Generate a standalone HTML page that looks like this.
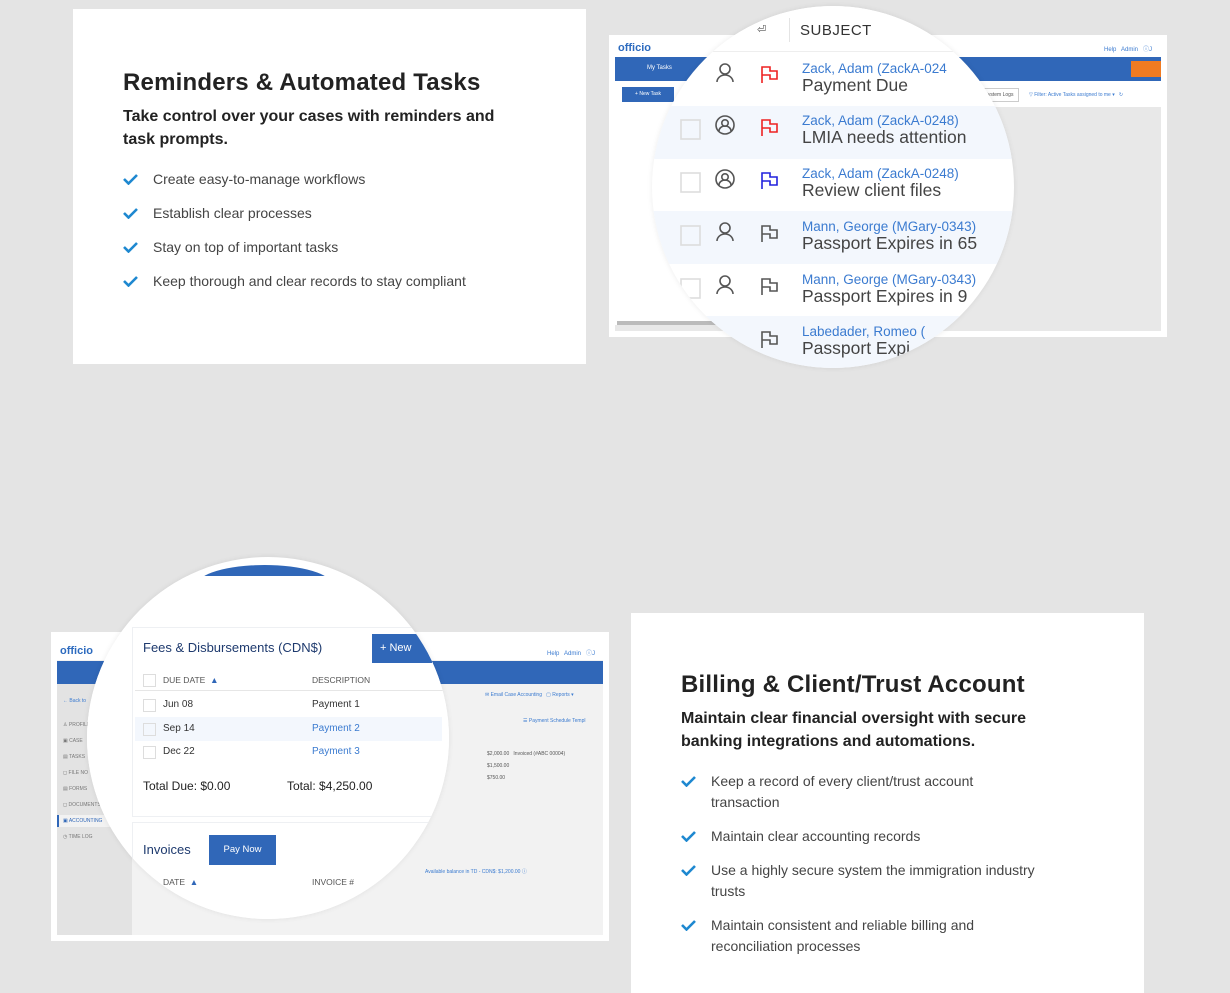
<!DOCTYPE html>
<html><head><meta charset="utf-8"><style>
*{margin:0;padding:0;box-sizing:border-box}
body{width:1230px;height:989px;background:#e4e4e4;font-family:"Liberation Sans",sans-serif;position:relative;overflow:hidden;color:#222}
.abs{position:absolute}
.card{position:absolute;background:#fff}
h2{font-size:24px;font-weight:bold;color:#222;letter-spacing:0.2px}
.sub{font-size:16px;font-weight:bold;line-height:23px;color:#222;margin-top:8px}
ul{list-style:none;margin-top:18px}
li{position:relative;padding-left:30px;font-size:14px;color:#444;line-height:21px;margin-bottom:13px}
li svg{position:absolute;left:0;top:5px}
.shot{position:absolute;background:#fff}
.circle{position:absolute;border-radius:50%;background:#fff;overflow:hidden;box-shadow:0 0 6px rgba(0,0,0,.08)}
.blue{color:#3b7bd0}
.side{position:absolute;left:12px;font-size:5px;color:#777}
</style></head><body>

<div class="card" style="left:73px;top:9px;width:513px;height:355px;padding:60px 0 0 50px">
<h2>Reminders &amp; Automated Tasks</h2>
<div class="sub">Take control over your cases with reminders and<br>task prompts.</div>
<ul>
<li><svg width="15" height="11"><path d="M1 5l4.5 4.5L14 1" stroke="#1e88d0" stroke-width="2.6" fill="none"/></svg>Create easy-to-manage workflows</li>
<li><svg width="15" height="11"><path d="M1 5l4.5 4.5L14 1" stroke="#1e88d0" stroke-width="2.6" fill="none"/></svg>Establish clear processes</li>
<li><svg width="15" height="11"><path d="M1 5l4.5 4.5L14 1" stroke="#1e88d0" stroke-width="2.6" fill="none"/></svg>Stay on top of important tasks</li>
<li><svg width="15" height="11"><path d="M1 5l4.5 4.5L14 1" stroke="#1e88d0" stroke-width="2.6" fill="none"/></svg>Keep thorough and clear records to stay compliant</li>
</ul>
</div>

<div class="shot" style="left:609px;top:35px;width:558px;height:302px">
 <div class="abs" style="left:6px;top:6px;width:546px;height:290px;background:#e8e8e8"></div>
 <div class="abs" style="left:6px;top:6px;width:546px;height:16px;background:#fff"></div>
 <div class="abs" style="left:9px;top:7px;font-size:11px;font-weight:bold;color:#2d6bbf">officio</div>
 <div class="abs" style="left:495px;top:9px;font-size:6px;color:#3b7bd0">Help &nbsp; Admin &nbsp; ⓘJ</div>
 <div class="abs" style="left:6px;top:22px;width:546px;height:24px;background:#3067b8"></div>
 <div class="abs" style="left:38px;top:30px;font-size:6px;color:#fff">My Tasks</div>
 <div class="abs" style="left:522px;top:26px;width:30px;height:16px;background:#f07b22"></div>
 <div class="abs" style="left:6px;top:46px;width:546px;height:26px;background:#fff"></div>
 <div class="abs" style="left:13px;top:52px;width:52px;height:15px;background:#3067b8;color:#fff;font-size:5px;line-height:15px;text-align:center">+ New Task</div>
 <div class="abs" style="left:370px;top:53px;width:40px;height:14px;border:1px solid #ccc;font-size:5px;line-height:12px;text-align:center;color:#555">System Logs</div>
 <div class="abs" style="left:420px;top:57px;font-size:5px;color:#3b7bd0">▽ Filter: Active Tasks assigned to me ▾ &nbsp; ↻</div>
 <div class="abs" style="left:6px;top:72px;width:100px;height:218px;background:#fff"></div>
 <div class="abs" style="left:8px;top:286px;width:100px;height:4px;background:#bbb"></div>
</div>
<div class="circle" style="left:652px;top:6px;width:362px;height:362px">
 <div class="abs" style="left:0;top:0;width:362px;height:46px;background:#fff;border-bottom:1px solid #eee"></div>
 <div class="abs" style="left:105px;top:17px;font-size:11px;color:#555">⏎</div>
 <div class="abs" style="left:137px;top:12px;width:1px;height:24px;background:#e4e4e4"></div>
 <div class="abs" style="left:148px;top:16px;font-size:15px;color:#333;letter-spacing:.5px">SUBJECT</div>
 <div class="abs" style="left:0;top:100px;width:362px;height:53px;background:#f3f7fd"></div>
 <div class="abs" style="left:0;top:205px;width:362px;height:53px;background:#f3f7fd"></div>
 <div class="abs" style="left:0;top:310px;width:362px;height:53px;background:#f3f7fd"></div>
 <div class="abs" style="left:150px;top:55px;font-size:13.5px;line-height:16px"><span class="blue">Zack, Adam (ZackA-024</span><br><span style="font-size:17.5px;color:#444">Payment Due</span></div>
 <div class="abs" style="left:150px;top:107px;font-size:13.5px;line-height:16px"><span class="blue">Zack, Adam (ZackA-0248)</span><br><span style="font-size:17.5px;color:#444">LMIA needs attention</span></div>
 <div class="abs" style="left:150px;top:160px;font-size:13.5px;line-height:16px"><span class="blue">Zack, Adam (ZackA-0248)</span><br><span style="font-size:17.5px;color:#444">Review client files</span></div>
 <div class="abs" style="left:150px;top:213px;font-size:13.5px;line-height:16px"><span class="blue">Mann, George (MGary-0343)</span><br><span style="font-size:17.5px;color:#444">Passport Expires in 65</span></div>
 <div class="abs" style="left:150px;top:266px;font-size:13.5px;line-height:16px"><span class="blue">Mann, George (MGary-0343)</span><br><span style="font-size:17.5px;color:#444">Passport Expires in 9</span></div>
 <div class="abs" style="left:150px;top:318px;font-size:13.5px;line-height:16px"><span class="blue">Labedader, Romeo (</span><br><span style="font-size:17.5px;color:#444">Passport Expi</span></div>
 <svg class="abs" style="left:0;top:0" width="362" height="362">
  <g fill="none" stroke-width="1.6">
   <rect x="29" y="114" width="19" height="19" stroke="#ddd"/>
   <rect x="29" y="167" width="19" height="19" stroke="#ddd"/>
   <rect x="29" y="220" width="19" height="19" stroke="#ddd"/>
   <rect x="29" y="273" width="19" height="19" stroke="#ddd"/>
   <g stroke="#555">
    <circle cx="73" cy="63" r="5"/><path d="M65 76a8 7 0 0 1 16 0"/>
    <circle cx="73" cy="119" r="9"/><circle cx="73" cy="117" r="3.2"/><path d="M67 125a6 5 0 0 1 12 0"/>
    <circle cx="73" cy="173" r="9"/><circle cx="73" cy="171" r="3.2"/><path d="M67 179a6 5 0 0 1 12 0"/>
    <circle cx="73" cy="222" r="5"/><path d="M65 235a8 7 0 0 1 16 0"/>
    <circle cx="73" cy="275" r="5"/><path d="M65 288a8 7 0 0 1 16 0"/>
   </g>
   <path d="M110 77V61h8v4h7v8h-7v-4h-8" stroke="#e22"/>
   <path d="M110 130V114h8v4h7v8h-7v-4h-8" stroke="#e22"/>
   <path d="M110 183V167h8v4h7v8h-7v-4h-8" stroke="#22d"/>
   <path d="M110 236V220h8v4h7v8h-7v-4h-8" stroke="#555"/>
   <path d="M110 289V273h8v4h7v8h-7v-4h-8" stroke="#555"/>
   <path d="M110 342V326h8v4h7v8h-7v-4h-8" stroke="#555"/>
  </g>
 </svg>
</div>

<div class="shot" style="left:51px;top:632px;width:558px;height:309px">
 <div class="abs" style="left:6px;top:6px;width:546px;height:297px;background:#f2f2f2"></div>
 <div class="abs" style="left:6px;top:6px;width:546px;height:22px;background:#fff"></div>
 <div class="abs" style="left:9px;top:13px;font-size:11px;font-weight:bold;color:#2d6bbf">officio</div>
 <div class="abs" style="left:496px;top:16px;font-size:6px;color:#3b7bd0">Help &nbsp; Admin &nbsp; ⓘJ</div>
 <div class="abs" style="left:6px;top:29px;width:546px;height:23px;background:#3067b8"></div>
 <div class="abs" style="left:6px;top:52px;width:75px;height:251px;background:#e3e3e3"></div>
 <div class="side" style="top:66px;color:#3b7bd0">← Back to</div>
 <div class="side" style="top:90px">♙ PROFILE</div>
 <div class="side" style="top:106px">▣ CASE</div>
 <div class="side" style="top:122px">▤ TASKS</div>
 <div class="side" style="top:138px">◻ FILE NO</div>
 <div class="side" style="top:154px">▤ FORMS</div>
 <div class="side" style="top:170px">◻ DOCUMENTS</div>
 <div class="abs" style="left:6px;top:183px;width:75px;height:12px;background:#f2f2f2;border-left:2px solid #3067b8"></div>
 <div class="side" style="top:186px;color:#3067b8">▣ ACCOUNTING</div>
 <div class="side" style="top:202px">◷ TIME LOG</div>
 <div class="abs" style="left:434px;top:60px;font-size:5px;color:#3b7bd0">✉ Email Case Accounting &nbsp; ▢ Reports ▾</div>
 <div class="abs" style="left:472px;top:86px;font-size:5px;color:#3b7bd0">☰ Payment Schedule Templ</div>
 <div class="abs" style="left:436px;top:116px;font-size:5px;color:#555;line-height:12px">$2,000.00 &nbsp; Invoiced (#ABC 00004)<br>$1,500.00<br>$750.00</div>
 <div class="abs" style="left:374px;top:236px;font-size:5px;color:#3b7bd0">Available balance in TD - CDN$: $1,200.00 ⓘ</div>
</div>
<div class="circle" style="left:87px;top:557px;width:362px;height:362px">
 <div class="abs" style="left:110px;top:8px;width:135px;height:40px;border-radius:50%;background:#3067b8"></div>
 <div class="abs" style="left:0;top:19px;width:362px;height:343px;background:#fff"></div>
 <div class="abs" style="left:45px;top:70px;width:320px;height:190px;border:1px solid #eef0f3"></div>
 <div class="abs" style="left:56px;top:83px;font-size:13px;color:#1e3a6e">Fees &amp; Disbursements (CDN$)</div>
 <div class="abs" style="left:285px;top:77px;width:60px;height:29px;background:#3067b8;color:#fff;font-size:11px;line-height:29px;padding-left:8px">+ New</div>
 <div class="abs" style="left:48px;top:133px;width:310px;height:1px;background:#e6e6e6"></div>
 <div class="abs" style="left:48px;top:160px;width:307px;height:24px;background:#f3f7fd"></div>
 <svg class="abs" style="left:0;top:0" width="362" height="362"><g fill="none" stroke="#ddd"><rect x="56.5" y="117.5" width="12" height="12"/><rect x="56.5" y="142.5" width="12" height="12"/><rect x="56.5" y="166.5" width="12" height="12"/><rect x="56.5" y="189.5" width="12" height="12"/></g></svg>
 <div class="abs" style="left:76px;top:118px;font-size:8.5px;color:#555">DUE DATE &nbsp;<span style="color:#3067b8">▲</span></div>
 <div class="abs" style="left:225px;top:118px;font-size:8.5px;color:#555">DESCRIPTION</div>
 <div class="abs" style="left:76px;top:142px;font-size:10px;color:#333">Jun 08</div>
 <div class="abs" style="left:225px;top:142px;font-size:10px;color:#333">Payment 1</div>
 <div class="abs" style="left:76px;top:166px;font-size:10px;color:#333">Sep 14</div>
 <div class="abs" style="left:225px;top:166px;font-size:10px"><span class="blue">Payment 2</span></div>
 <div class="abs" style="left:76px;top:189px;font-size:10px;color:#333">Dec 22</div>
 <div class="abs" style="left:225px;top:189px;font-size:10px"><span class="blue">Payment 3</span></div>
 <div class="abs" style="left:56px;top:222px;font-size:12px;color:#222">Total Due: $0.00</div>
 <div class="abs" style="left:200px;top:222px;font-size:12px;color:#222">Total: $4,250.00</div>
 <div class="abs" style="left:45px;top:265px;width:320px;height:100px;border:1px solid #eef0f3"></div>
 <div class="abs" style="left:56px;top:285px;font-size:13px;color:#1e3a6e">Invoices</div>
 <div class="abs" style="left:122px;top:278px;width:67px;height:30px;background:#3067b8;color:#fff;font-size:9.5px;line-height:30px;text-align:center">Pay Now</div>
 <div class="abs" style="left:76px;top:320px;font-size:8.5px;color:#555">DATE &nbsp;<span style="color:#3067b8">▲</span></div>
 <div class="abs" style="left:225px;top:320px;font-size:8.5px;color:#555">INVOICE #</div>
</div>

<div class="card" style="left:631px;top:613px;width:513px;height:380px;padding:58px 0 0 50px">
<h2>Billing &amp; Client/Trust Account</h2>
<div class="sub">Maintain clear financial oversight with secure<br>banking integrations and automations.</div>
<ul>
<li><svg width="15" height="11"><path d="M1 5l4.5 4.5L14 1" stroke="#1e88d0" stroke-width="2.6" fill="none"/></svg>Keep a record of every client/trust account<br>transaction</li>
<li><svg width="15" height="11"><path d="M1 5l4.5 4.5L14 1" stroke="#1e88d0" stroke-width="2.6" fill="none"/></svg>Maintain clear accounting records</li>
<li><svg width="15" height="11"><path d="M1 5l4.5 4.5L14 1" stroke="#1e88d0" stroke-width="2.6" fill="none"/></svg>Use a highly secure system the immigration industry<br>trusts</li>
<li><svg width="15" height="11"><path d="M1 5l4.5 4.5L14 1" stroke="#1e88d0" stroke-width="2.6" fill="none"/></svg>Maintain consistent and reliable billing and<br>reconciliation processes</li>
</ul>
</div>
</body></html>
